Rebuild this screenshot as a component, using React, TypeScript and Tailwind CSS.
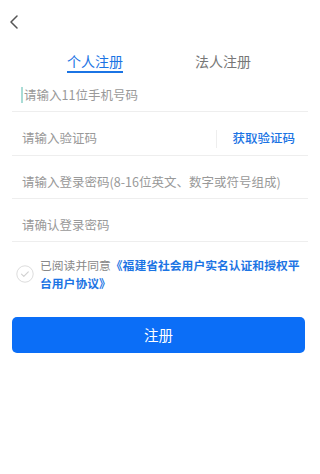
const font = { fontFamily: '"Noto Sans CJK SC", "Noto Sans", sans-serif' };

function BackIcon() {
  return (
    <svg width="10" height="14" viewBox="0 0 10 14" fill="none">
      <path d="M8 1L2 7l6 6" stroke="#555" strokeWidth="1.5" strokeLinecap="round" strokeLinejoin="round" />
    </svg>
  );
}

function CheckCircle() {
  return (
    <svg width="18" height="18" viewBox="0 0 18 18" fill="none" className="shrink-0">
      <circle cx="9" cy="9" r="8.2" stroke="#dcdcdc" strokeWidth="1" />
      <path d="M5.5 9.2l2.3 2.2 4.5-4.6" stroke="#d0d0d0" strokeWidth="1.1" strokeLinecap="round" strokeLinejoin="round" />
    </svg>
  );
}

export default function App() {
  return (
    <div className="min-h-[474px] w-[320px] bg-white" style={font}>
      <div className="flex h-[51px] items-start pt-[15px] pl-[9px]">
        <BackIcon />
      </div>

      <div className="flex h-[22px] px-[67px]">
        <div className="flex w-[56px] flex-col items-center">
          <span className="text-[14px] leading-[20px] text-[#1b74e4]">个人注册</span>
          <span className="h-[2px] w-full bg-[#1b74e4]" />
        </div>
        <span className="ml-[72px] text-[14px] leading-[20px] text-[#777]">法人注册</span>
      </div>

      <div className="mx-[12px]">
        <div className="flex h-[39px] items-center border-b border-[#eeeeee] pt-[6px] pl-[9px]">
          <span className="mr-[1px] h-[16px] w-[2px] bg-[#a9dcd6]" />
          <span className="text-[12.5px] text-[#999]">请输入11位手机号码</span>
        </div>
        <div className="flex h-[44px] items-center border-b border-[#eeeeee] pt-[10px] pl-[10px]">
          <span className="flex-1 text-[12.5px] text-[#999]">请输入验证码</span>
          <span className="h-[18px] w-px bg-[#eeeeee]" />
          <span className="ml-[15px] mr-[13px] text-[12.5px] font-medium text-[#1b74e4]">获取验证码</span>
        </div>
        <div className="flex h-[43px] items-center border-b border-[#eeeeee] pt-[10px] pl-[10px]">
          <span className="text-[12.5px] text-[#999]">请输入登录密码(8-16位英文、数字或符号组成)</span>
        </div>
        <div className="flex h-[43px] items-center border-b border-[#eeeeee] pt-[10px] pl-[10px]">
          <span className="text-[12.5px] text-[#999]">请确认登录密码</span>
        </div>
      </div>

      <div className="mt-[14px] flex items-center pl-[16px] pr-[16px]">
        <CheckCircle />
        <p className="ml-[6px] text-[11.8px] leading-[18px] text-[#888]">
          已阅读并同意
          <span className="font-bold text-[#1b74e4]">《福建省社会用户实名认证和授权平台用户协议》</span>
        </p>
      </div>

      <div className="mt-[25px] pl-[12px] pr-[15px]">
        <button
          type="button"
          className="flex h-[36px] w-full items-center justify-center rounded-[5px] bg-[#0b6ef7] text-[14.5px] text-white"
        >
          注册
        </button>
      </div>
    </div>
  );
}
